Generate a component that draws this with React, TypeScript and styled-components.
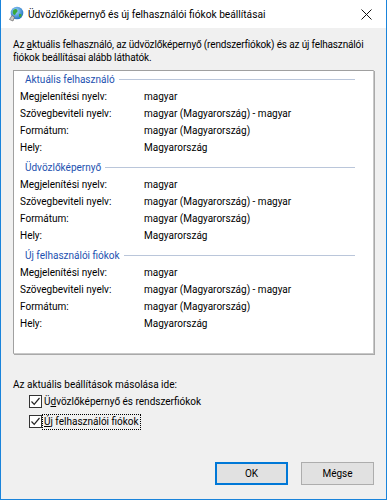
import React from "react";
import styled, { createGlobalStyle } from "styled-components";

const Global = createGlobalStyle`
  html, body { margin: 0; padding: 0; background: #ffffff; }
  * { box-sizing: border-box; }
`;

const Window = styled.div`
  width: 387px;
  height: 500px;
  display: flex;
  flex-direction: column;
  border: 1px solid #1a84db;
  border-top: none;
  background: #f0f0f0;
  font-family: Roboto, "Noto Sans", sans-serif;
  font-size: 10px;
  color: #000;
`;

const TitleBar = styled.div`
  height: 28px;
  background: #fff;
  display: flex;
  align-items: center;
  padding-left: 7px;
  flex-shrink: 0;
`;

const TitleText = styled.div`
  margin-left: 4px;
  flex: 1;
  white-space: nowrap;
  font-size: 10.2px;
`;

const CloseBtn = styled.div`
  width: 30px;
  height: 28px;
  display: flex;
  align-items: center;
  justify-content: center;
  margin-right: 5px;
`;

const Body = styled.div`
  flex: 1;
  display: flex;
  flex-direction: column;
  padding: 10px 12px 14px 12px;
`;

const Description = styled.div`
  line-height: 13px;
  white-space: nowrap;
  letter-spacing: -0.15px;
`;

const U = styled.span`
  text-decoration: underline;
  text-underline-offset: 1px;
`;

const Panel = styled.div`
  margin-top: 6px;
  height: 284px;
  background: #fff;
  border: 1px solid #a0a0a0;
  border-right-color: #c8c8c8;
  border-bottom-color: #c8c8c8;
  box-shadow: 1px 1px 0 #a9a9a9;
  padding: 0 18px 0 6px;
`;

const Section = styled.div`
  display: flex;
  flex-direction: column;
  padding-bottom: 3px;
`;

const Heading = styled.div`
  height: 14px;
  margin-top: 1px;
  display: flex;
  align-items: center;
  padding-left: 5px;
  color: #1c51b0;
  margin-bottom: 2px;
  &::after {
    content: "";
    flex: 1;
    height: 1px;
    background: #bac6da;
    margin-left: 4px;
  }
`;

const Row = styled.div`
  height: 17px;
  display: grid;
  grid-template-columns: 124px 1fr;
  align-items: center;
  white-space: nowrap;
`;

const CopyLabel = styled.div`
  margin-top: 24px;
  line-height: 13px;
`;

const CheckList = styled.div`
  display: flex;
  flex-direction: column;
  gap: 5px;
  margin-top: 3px;
  padding-left: 16px;
`;

const CheckRow = styled.label`
  display: flex;
  align-items: center;
  height: 15px;
  gap: 1px;
`;

const Box = styled.span`
  width: 13px;
  height: 13px;
  border: 1px solid #333;
  background: #fff;
  display: flex;
  align-items: center;
  justify-content: center;
`;

const CheckText = styled.span<{ $focused?: boolean }>`
  padding: 0 1px;
  line-height: 14px;
  outline: ${(p) => (p.$focused ? "1px dotted #000" : "none")};
`;

const Buttons = styled.div`
  margin-top: auto;
  display: flex;
  justify-content: flex-end;
  gap: 13px;
`;

const Button = styled.button<{ $default?: boolean }>`
  width: 73px;
  height: 23px;
  font: inherit;
  color: #000;
  background: #e1e1e1;
  border: ${(p) => (p.$default ? "2px solid #0078d7" : "1px solid #adadad")};
  padding: 0;
`;

const sections = [
  "Aktuális felhasználó",
  "Üdvözlőképernyő",
  "Új felhasználói fiókok",
];

const rows: [string, string][] = [
  ["Megjelenítési nyelv:", "magyar"],
  ["Szövegbeviteli nyelv:", "magyar (Magyarország) - magyar"],
  ["Formátum:", "magyar (Magyarország)"],
  ["Hely:", "Magyarország"],
];

const Check = () => (
  <Box>
    <svg width="11" height="11" viewBox="0 0 11 11">
      <path d="M1.5 5.5 L4.2 8.3 L9.5 2" fill="none" stroke="#222" strokeWidth="1.2" />
    </svg>
  </Box>
);

const GlobeIcon = () => (
  <svg width="16" height="16" viewBox="0 0 16 16">
    <defs>
      <radialGradient id="g" cx="0.4" cy="0.35" r="0.7">
        <stop offset="0" stopColor="#9fd8ff" />
        <stop offset="1" stopColor="#1f6fc0" />
      </radialGradient>
    </defs>
    <circle cx="9" cy="7" r="6.3" fill="url(#g)" />
    <path d="M6 3.5 C7.5 2.5 9 3 9.5 4.5 C10 6 8 6.5 7.5 8 C7 9.5 5.5 9 5 7.5 C4.6 6 4.8 4.5 6 3.5Z" fill="#3aa83a" />
    <path d="M11 8 C12.5 7.5 14 8.5 13.5 10 C13 11 11.5 11.5 11 10.5Z" fill="#3aa83a" />
    <path d="M1.5 13.5 L4 9.5 L6.5 11 L5 15 Z" fill="#c8c8c8" stroke="#6a6a6a" strokeWidth="0.7" />
  </svg>
);

export default function App() {
  return (
    <>
      <Global />
      <Window>
        <TitleBar>
          <GlobeIcon />
          <TitleText>Üdvözlőképernyő és új felhasználói fiókok beállításai</TitleText>
          <CloseBtn>
            <svg width="11" height="11" viewBox="0 0 11 11">
              <path d="M0.5 0.5 L10.5 10.5 M10.5 0.5 L0.5 10.5" stroke="#111" strokeWidth="1" />
            </svg>
          </CloseBtn>
        </TitleBar>
        <Body>
          <Description>
            Az <U>a</U>ktuális felhasználó, az üdvözlőképernyő (rendszerfiókok) és az új felhasználói
            <br />
            fiókok beállításai alább láthatók.
          </Description>
          <Panel>
            {sections.map((s) => (
              <Section key={s}>
                <Heading>{s}</Heading>
                {rows.map(([k, v]) => (
                  <Row key={k}>
                    <span>{k}</span>
                    <span>{v}</span>
                  </Row>
                ))}
              </Section>
            ))}
          </Panel>
          <CopyLabel>Az aktuális beállítások másolása ide:</CopyLabel>
          <CheckList>
            <CheckRow>
              <Check />
              <CheckText>
                Ü<U>d</U>vözlőképernyő és rendszerfiókok
              </CheckText>
            </CheckRow>
            <CheckRow>
              <Check />
              <CheckText $focused>
                <U>Ú</U>j felhasználói fiókok
              </CheckText>
            </CheckRow>
          </CheckList>
          <Buttons>
            <Button $default>OK</Button>
            <Button>Mégse</Button>
          </Buttons>
        </Body>
      </Window>
    </>
  );
}
